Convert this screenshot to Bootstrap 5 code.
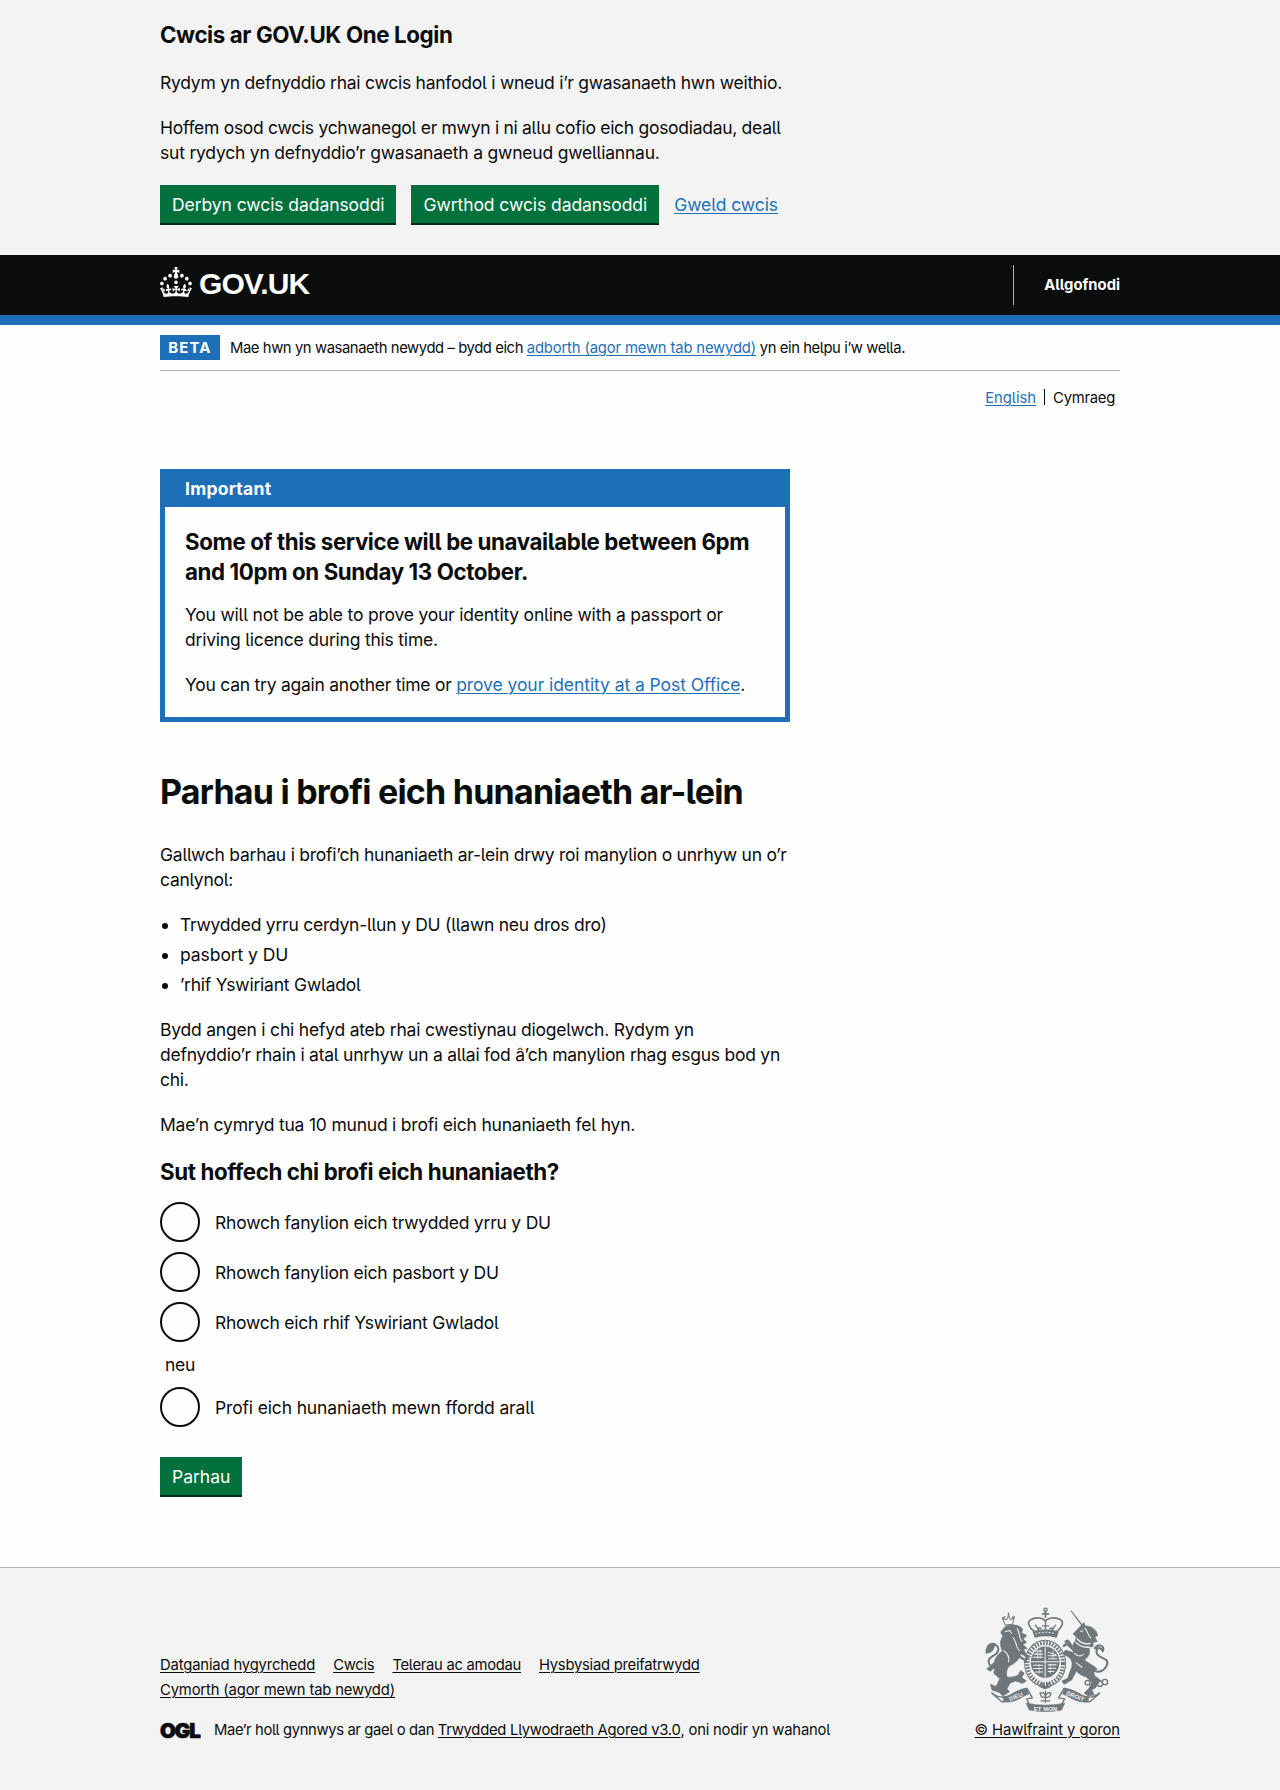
<!DOCTYPE html>
<html lang="cy">
<head>
<meta charset="utf-8">
<meta name="viewport" content="width=device-width, initial-scale=1">
<title>Parhau i brofi eich hunaniaeth ar-lein</title>
<link href="https://cdn.jsdelivr.net/npm/bootstrap@5.3.0/dist/css/bootstrap.min.css" rel="stylesheet">
<style>
body{font-family:Inter,"Liberation Sans",sans-serif;font-feature-settings:"cv05";font-size:17.5px;line-height:25px;letter-spacing:-.25px;color:#0b0c0c;background:#fefefe}
.shell{width:960px;margin:0 auto}
.two-thirds{width:630px}
p{margin-bottom:20px}
h1,h2,h3{font-weight:700;color:#0b0c0c}
h1{font-size:34px;line-height:40px;letter-spacing:-.77px;margin:0 0 30px}
h2,h3{font-size:22.3px;line-height:30px;letter-spacing:-.38px}
a{color:#1d70b8;text-underline-offset:2px;text-decoration-thickness:1px}
.ink-link{color:#0b0c0c}
.fs-mini{font-size:14.8px}
.one-line{white-space:nowrap}
.ls-0{letter-spacing:0}
.ls-a{letter-spacing:-.07px}
.ls-b{letter-spacing:-.15px}
.ls-c{letter-spacing:-.21px}
.ls-d{letter-spacing:-.29px}
.ls-e{letter-spacing:-.37px}
.ls-f{letter-spacing:-.41px}
.soft-band{background:#f3f3f3}
.cookie-band{height:255px;padding-top:20px}
.cookie-band h2{height:50px}
.cookie-actions{gap:15px}
.gov-btn{display:inline-flex;align-items:center;background:#00703c;color:#fff;border-radius:0;border:0;box-shadow:0 2px 0 #002d18;font-size:17.5px;line-height:19px;height:38px;padding:0 12px}
.gov-btn:hover{background:#005a30;color:#fff}
.head-bar{background:#0b0c0c;height:70px;border-bottom:10px solid #1d70b8}
.head-bar .shell{height:60px}
.brand{padding-bottom:2px}
.wordmark{font:700 30px/34px "Liberation Sans",sans-serif;letter-spacing:-.9px;margin-left:7px}
.sign-out{border-left:1px solid #b1b4b6;height:40px;padding-left:30px;color:#fff;font-weight:700}
.phase-row{height:46px;border-bottom:1px solid #b1b4b6}
.phase-tag{background:#1d70b8;color:#fff;font-weight:700;font-size:15px;letter-spacing:1.1px;width:60px;height:25px;margin-right:10px}
.phase-text{padding-top:2px}
.lang-row{height:98px;padding:17px 5px 0 0;line-height:20px}
.lang-sep{width:1px;height:16px;background:#0b0c0c;margin:1px 8px 0}
.notice{border:5px solid #1d70b8;height:253px;margin-bottom:50px}
.notice-title{background:#1d70b8;color:#fff;font-weight:700;height:33px;padding:2px 20px 0;letter-spacing:.25px}
.notice-body{padding:20px 20px 0}
.notice-body h3{margin-bottom:15px;letter-spacing:-.39px}
.dots{padding-left:20px;margin-bottom:20px}
.dots li{margin-bottom:5px}
.choice-title{height:45px}
.choice{gap:15px;margin-bottom:10px}
.choice .form-check-input{width:40px;height:40px;margin:0;border:2px solid #0b0c0c;background-color:transparent;flex:none;float:none}
.choice-or{height:35px;padding-left:5px}
.go-on{margin-top:30px}
.foot{border-top:1px solid #b1b4b6;height:223px;margin-top:72px}
.foot-main{padding-top:85px}
.foot-links{gap:0 18px}
.foot-licence{margin-top:15px}
.ogl-mark{font-weight:900;font-size:20.5px;line-height:20px;letter-spacing:-1.1px;width:54px;-webkit-text-stroke:.7px #0b0c0c}
.foot-crest{padding-top:39px}
.arms{width:126px;height:105px;margin:0 10px 6px 0}
.motto{font:900 18px/1 "Liberation Sans",sans-serif;letter-spacing:0}
</style>
</head>
<body>

<section class="soft-band cookie-band">
  <div class="shell">
    <h2 class="mb-0 one-line">Cwcis ar GOV.UK One Login</h2>
    <div class="two-thirds">
      <p>Rydym yn defnyddio rhai cwcis hanfodol i wneud i’r gwasanaeth hwn weithio.</p>
      <p><span class="ls-d">Hoffem osod cwcis ychwanegol er mwyn i ni allu cofio eich gosodiadau, deall</span> <span class="ls-c">sut rydych yn defnyddio’r gwasanaeth a gwneud gwelliannau.</span></p>
    </div>
    <div class="d-flex align-items-center cookie-actions">
      <button class="btn gov-btn ls-a">Derbyn cwcis dadansoddi</button>
      <button class="btn gov-btn ls-a">Gwrthod cwcis dadansoddi</button>
      <a href="#" class="ls-a">Gweld cwcis</a>
    </div>
  </div>
</section>

<header class="head-bar">
  <div class="shell d-flex align-items-center justify-content-between">
    <div class="d-flex align-items-center text-white brand">
      <svg class="mb-1" width="32" height="30" viewBox="0 0 32 30" fill="#fff" aria-hidden="true"><path d="M22.6 10.4c-1 .4-2-.1-2.4-1-.4-.9.1-2 1-2.4.9-.4 2 .1 2.4 1s-.1 2-1 2.4m-5.9 6.7c-.9.4-2-.1-2.4-1-.4-.9.1-2 1-2.4.9-.4 2 .1 2.4 1s-.1 2-1 2.4m10.8-3.7c-1 .4-2-.1-2.4-1-.4-.9.1-2 1-2.4.9-.4 2 .1 2.4 1s0 2-1 2.4m3.3 4.8c-1 .4-2-.1-2.4-1-.4-.9.1-2 1-2.4.9-.4 2 .1 2.4 1s-.1 2-1 2.4M17 4.7l2.3 1.2V2.5l-2.3.7-.2-.2.9-3h-3.4l.9 3-.2.2c-.1.1-2.3-.7-2.3-.7v3.4L15 4.7c.1.1.1.2.2.2l-1.3 4c-.1.2-.1.4-.1.6 0 1.1.8 2 1.9 2.2h.7c1-.2 1.9-1.1 1.9-2.1 0-.2 0-.4-.1-.6l-1.3-4c-.1-.2 0-.2.1-.3m-7.6 5.7c.9.4 2-.1 2.4-1 .4-.9-.1-2-1-2.4-.9-.4-2 .1-2.4 1s0 2 1 2.4m-5 3c.9.4 2-.1 2.4-1 .4-.9-.1-2-1-2.4-.9-.4-2 .1-2.4 1s.1 2 1 2.4m-3.2 4.8c.9.4 2-.1 2.4-1 .4-.9-.1-2-1-2.4-.9-.4-2 .1-2.4 1s0 2 1 2.4m14.8 11c4.4 0 8.6.3 12.3.8 1.1-4.5 2.4-7 3.7-8.8l-2.5-.9c.2 1.3.3 1.9 0 2.7-.4-.4-.8-1.1-1.1-2.3l-1.2 4c.7-.5 1.3-.8 2-.9-1.1 2.5-2.6 3.1-3.5 3-1.1-.2-1.7-1.2-1.5-2.1.3-1.2 1.5-1.5 2.1-.1 1.1-2.3-.8-3-2-2.3 1.9-1.9 2.1-3.5.6-5.6-2.1 1.6-2.1 3.2-1.2 5.5-1.2-1.4-3.2-.6-2.5 1.6.9-1.4 2.1-.5 1.9.8-.2 1.1-1.7 2.1-3.5 1.9-2.7-.2-2.9-2.1-2.9-3.6.7-.1 1.9.5 2.9 1.9l.4-4.3c-1.1 1.1-2.1 1.4-3.2 1.4.4-1.2 2.1-3 2.1-3h-5.4s1.7 1.9 2.1 3c-1.1 0-2.1-.2-3.2-1.4l.4 4.3c1-1.4 2.2-2 2.9-1.9-.1 1.5-.2 3.4-2.9 3.6-1.9.2-3.4-.8-3.5-1.9-.2-1.3 1-2.2 1.9-.8.7-2.3-1.2-3-2.5-1.6.9-2.2.9-3.9-1.2-5.5-1.5 2-1.3 3.7.6 5.6-1.2-.7-3.1 0-2 2.3.6-1.4 1.8-1.1 2.1.1.2.9-.3 1.9-1.5 2.1-.9.2-2.4-.5-3.5-3 .6 0 1.2.3 2 .9l-1.2-4c-.3 1.1-.7 1.9-1.1 2.3-.3-.8-.2-1.4 0-2.7l-2.9.9C1.3 23 2.6 25.5 3.7 30c3.7-.5 7.9-.8 12.3-.8"/></svg>
      <span class="wordmark">GOV.UK</span>
    </div>
    <a href="#" class="sign-out fs-mini ls-0 text-decoration-none d-flex align-items-center">Allgofnodi</a>
  </div>
</header>

<main class="shell">
  <div class="phase-row d-flex align-items-center fs-mini one-line">
    <span class="phase-tag d-flex align-items-center justify-content-center">BETA</span>
    <span class="phase-text"><span class="ls-f">Mae hwn yn wasanaeth newydd – bydd eich </span><a href="#" class="ls-b">adborth (agor mewn tab newydd)</a><span class="ls-f"> yn ein helpu i’w wella.</span></span>
  </div>
  <nav class="lang-row d-flex justify-content-end fs-mini">
    <a href="#" class="ls-0">English</a><span class="lang-sep"></span><span>Cymraeg</span>
  </nav>

  <div class="two-thirds">
    <section class="notice">
      <div class="notice-title">Important</div>
      <div class="notice-body">
        <h3>Some of this service will be unavailable between 6pm and 10pm on Sunday 13 October.</h3>
        <p class="ls-c">You will not be able to prove your identity online with a passport or driving licence during this time.</p>
        <p class="mb-0 one-line">You can try again another time or <a href="#" class="ls-a">prove your identity at a Post Office</a>.</p>
      </div>
    </section>

    <h1 class="one-line">Parhau i brofi eich hunaniaeth ar-lein</h1>
    <p>Gallwch barhau i brofi’ch hunaniaeth ar-lein drwy roi manylion o unrhyw un o’r canlynol:</p>
    <ul class="dots">
      <li>Trwydded yrru cerdyn-llun y DU (llawn neu dros dro)</li>
      <li class="ls-a">pasbort y DU</li>
      <li class="ls-c mb-0">’rhif Yswiriant Gwladol</li>
    </ul>
    <p><span class="ls-c">Bydd angen i chi hefyd ateb rhai cwestiynau diogelwch. Rydym yn</span><br>defnyddio’r rhain i atal unrhyw un a allai fod â’ch manylion rhag esgus bod yn chi.</p>
    <p class="ls-c">Mae’n cymryd tua 10 munud i brofi eich hunaniaeth fel hyn.</p>

    <form>
      <h2 class="mb-0 choice-title">Sut hoffech chi brofi eich hunaniaeth?</h2>
      <label class="choice d-flex align-items-center"><input class="form-check-input" type="radio" name="way"><span class="ls-c">Rhowch fanylion eich trwydded yrru y DU</span></label>
      <label class="choice d-flex align-items-center"><input class="form-check-input" type="radio" name="way"><span class="ls-c">Rhowch fanylion eich pasbort y DU</span></label>
      <label class="choice d-flex align-items-center"><input class="form-check-input" type="radio" name="way"><span>Rhowch eich rhif Yswiriant Gwladol</span></label>
      <div class="choice-or">neu</div>
      <label class="choice d-flex align-items-center mb-0"><input class="form-check-input" type="radio" name="way"><span class="ls-b">Profi eich hunaniaeth mewn ffordd arall</span></label>
      <button type="button" class="btn gov-btn d-flex go-on">Parhau</button>
    </form>
  </div>
</main>

<footer class="soft-band foot">
  <div class="shell d-flex justify-content-between fs-mini">
    <div class="foot-main">
      <div class="two-thirds d-flex flex-wrap foot-links">
        <a href="#" class="ink-link ls-b">Datganiad hygyrchedd</a>
        <a href="#" class="ink-link">Cwcis</a>
        <a href="#" class="ink-link ls-d">Telerau ac amodau</a>
        <a href="#" class="ink-link">Hysbysiad preifatrwydd</a>
        <a href="#" class="ink-link ls-b">Cymorth (agor mewn tab newydd)</a>
      </div>
      <div class="d-flex align-items-center one-line foot-licence">
        <span class="ogl-mark">OGL</span>
        <span><span class="ls-e">Mae’r holl gynnwys ar gael o dan </span><a href="#" class="ink-link">Trwydded Llywodraeth Agored v3.0</a><span class="ls-c">, oni nodir yn wahanol</span></span>
      </div>
    </div>
    <div class="d-flex flex-column align-items-end foot-crest">
      <svg class="arms" viewBox="75 50 375 312" fill="none" stroke="#6f777b" stroke-width="4" stroke-linecap="round" stroke-linejoin="round" aria-hidden="true">
        <!-- crown -->
        <g>
          <circle cx="258" cy="58" r="5"/><path d="M258 62V80M249 70H267" stroke-width="5"/>
          <path d="M224 122C208 110 202 94 215 87C231 78 252 82 258 92C264 82 287 78 302 87C314 94 308 110 292 122" stroke-width="5"/>
          <path d="M258 92V114M239 122C236 112 232 108 228 104M277 122C280 112 284 108 288 104M249 106H267M235 113H245M271 113H281"/>
          <path d="M222 124Q258 112 295 124L290 139Q258 130 227 139Z" fill="#6f777b"/>
          <path d="M229 129Q258 121 287 129" stroke="#f3f3f3" stroke-width="3" stroke-dasharray="3 7"/>
        </g>
        <!-- garter and shield -->
        <ellipse cx="257" cy="218" rx="61" ry="69" stroke-width="3"/>
        <ellipse cx="257" cy="218" rx="53" ry="61" stroke-width="12" stroke-dasharray="5 4" stroke-linecap="butt"/>
        <ellipse cx="257" cy="214" rx="42" ry="46" fill="#6f777b" stroke-width="2"/>
        <g stroke="#f3f3f3" stroke-width="3">
          <path d="M257 170V258M216 213H298"/>
          <path d="M224 190H249M221 199H250M224 181H248M266 184L288 192M266 195H291M267 204H292M222 223H249M223 233H249M228 243H250M266 222H290M266 232H288M266 242H283"/>
          <path d="M234 178V203M242 176V203M280 180V205M272 220V248M239 221V248" stroke-width="2"/>
        </g>
        <path d="M240 283Q257 300 274 283M248 278L257 291L266 278" stroke-width="6"/>
        <!-- lion -->
        <g>
          <path d="M130 84L138 103L160 101L165 81L154 88L148 75L142 88Z" stroke-width="3"/><path d="M148 68V75M130 83L137 79M159 81L165 78"/>
          <path d="M137 109C152 98 180 102 190 115L187 127L202 134L192 145L202 155L191 161L204 174L193 174L199 190L184 190C180 205 170 216 153 224C144 230 139 244 144 259C158 258 168 258 177 252L184 239L195 247L187 259L201 270L190 277L169 270L153 276L143 294L151 302L131 315L120 304L99 297L94 280L111 286L122 263L104 247L108 228L94 241L83 234L105 215C109 199 118 188 130 181C122 165 122 150 131 137L125 125Z" fill="#6f777b" stroke-width="2"/>
          <path d="M139 123L151 120L157 128M174 114C183 126 178 143 188 152M161 141C172 150 170 173 181 180M134 180C144 187 151 200 148 213" stroke="#f3f3f3" stroke-width="3"/>
          <path d="M110 231C85 225 82 207 101 196C121 185 124 170 106 160C92 157 83 165 86 182C96 182 99 174 106 160" stroke-width="6"/>
          <path d="M106 160C84 167 78 176 82 187C95 186 105 177 106 160Z" fill="#6f777b"/>
          <path d="M190 188L205 199L197 212M181 197L193 205" stroke-width="7"/>
        </g>
        <!-- unicorn -->
        <g>
          <path d="M335 62L366 103" stroke-width="4"/><path d="M335 62L357 86" stroke="#f3f3f3" stroke-width="1"/>
          <path d="M365 104L372 96L376 106C396 105 411 119 413 135L405 139L412 153L399 155L400 167L386 169C394 184 387 198 374 207C383 217 401 222 412 235L401 243L405 255L421 267C416 281 407 291 396 297L403 311L385 315L373 306L388 291L395 274L380 258C371 255 356 250 350 240L336 267L313 280L307 270L324 262L332 239C340 223 338 213 332 203L310 188L318 178L342 186C337 173 338 160 347 151L350 139L340 130L354 115Z" fill="#6f777b" stroke-width="2"/>
          <path d="M353 145C363 157 376 162 391 158M349 155C360 167 374 171 388 169" stroke="#f3f3f3" stroke-width="4"/>
          <path d="M375 113C386 121 381 133 393 142M362 122L369 121M344 188C355 198 362 198 371 191M349 216L367 229" stroke="#f3f3f3" stroke-width="3"/>
          <path d="M342 178L322 159L313 165M336 166L325 150L318 153" stroke-width="7"/>
          <path d="M393 235C413 250 434 240 441 222C450 198 412 205 410 185C409 171 419 165 429 181C436 164 414 157 405 173" stroke-width="6"/>
          <circle cx="383" cy="275" r="7"/><circle cx="404" cy="267" r="7"/><circle cx="420" cy="278" r="8"/><circle cx="435" cy="273" r="8"/><circle cx="401" cy="285" r="6"/>
        </g>
        <!-- motto ribbon -->
        <path d="M201 336Q258 348 315 336L306 356Q258 366 210 356Z" fill="#6f777b" stroke-width="2"/>
        <path d="M98 305Q122 325 150 314Q181 294 203 292L219 320L202 323L209 338M101 309L128 332Q167 334 194 312M419 305Q397 325 369 314Q337 294 313 292L297 320L315 323L307 338M417 309L390 332Q351 334 324 312" stroke-width="4"/>
        <path d="M132 317Q160 314 176 302L202 291L208 309L186 318Q161 335 134 331ZM386 317Q359 314 343 302L315 291L309 309L332 318Q357 335 384 331Z" fill="#6f777b" stroke-width="2"/>
        <g class="motto" fill="#f3f3f3" stroke="none" text-anchor="middle">
          <text transform="translate(172 322) rotate(-22)">DIEU</text>
          <text transform="translate(258 359)">ET MON</text>
          <text transform="translate(344 321) rotate(22)">DROIT</text>
        </g>
        <path d="M258 300V333M258 318Q244 322 242 306Q256 301 258 318Q260 301 274 306Q272 322 258 318M245 329H271"/>
      </svg>
      <a href="#" class="ink-link one-line ls-a">© Hawlfraint y goron</a>
    </div>
  </div>
</footer>
<script src="https://cdn.jsdelivr.net/npm/bootstrap@5.3.0/dist/js/bootstrap.bundle.min.js"></script>
</body>
</html>
